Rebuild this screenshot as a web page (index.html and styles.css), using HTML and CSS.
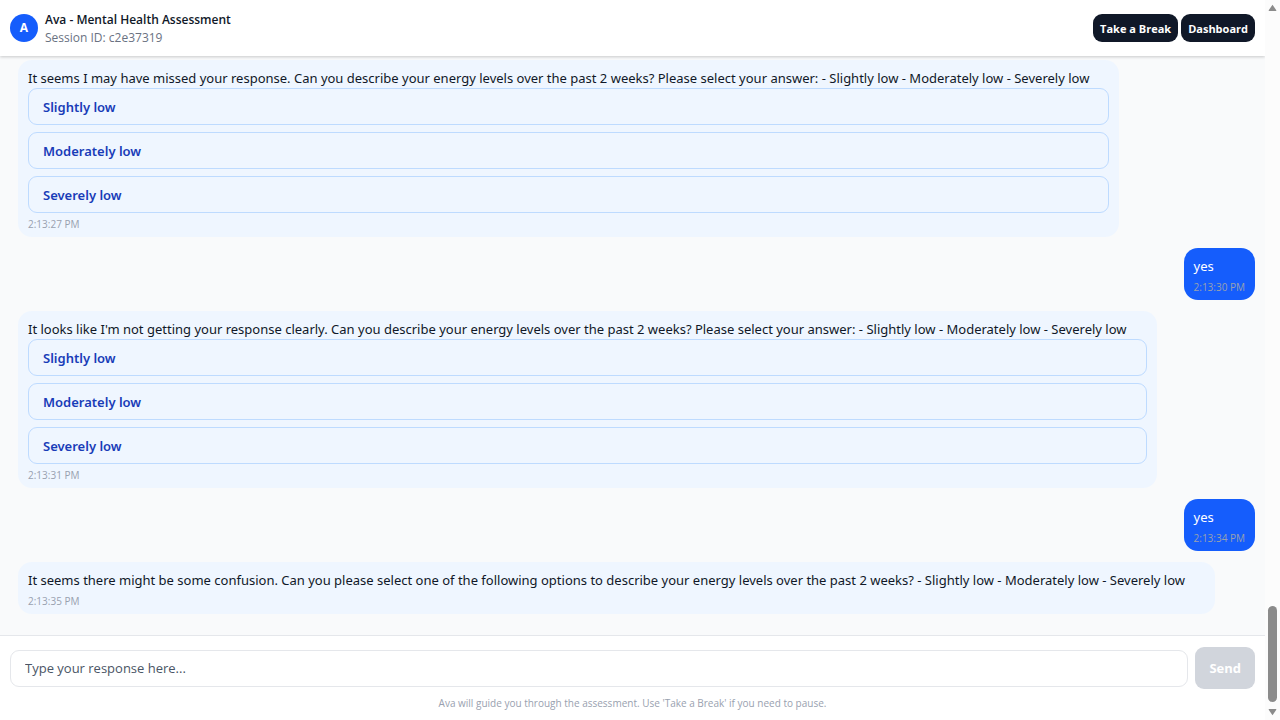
FILE: index.html
```html
<!DOCTYPE html>
<html lang="en">
<head>
<meta charset="utf-8">
<meta name="viewport" content="width=device-width, initial-scale=1">
<title>Ava - Mental Health Assessment</title>
<link rel="stylesheet" href="styles.css">
</head>
<body>
<div class="app">
  <header class="header">
    <div class="avatar" aria-hidden="true">A</div>
    <div class="identity">
      <h1 class="title">Ava - Mental Health Assessment</h1>
      <p class="session">Session ID: c2e37319</p>
    </div>
    <nav class="actions">
      <button class="action" type="button">Take a Break</button>
      <button class="action" type="button">Dashboard</button>
    </nav>
  </header>

  <main class="chat">
    <article class="bubble">
      <p class="text">It seems I may have missed your response. Can you describe your energy levels over the past 2 weeks? Please select your answer: - Slightly low - Moderately low - Severely low</p>
      <div class="options">
        <button class="option" type="button">Slightly low</button>
        <button class="option" type="button">Moderately low</button>
        <button class="option" type="button">Severely low</button>
      </div>
      <time class="time">2:13:27 PM</time>
    </article>
    <article class="bubble user">
      <p class="text">yes</p>
      <time class="time">2:13:30 PM</time>
    </article>
    <article class="bubble">
      <p class="text">It looks like I'm not getting your response clearly. Can you describe your energy levels over the past 2 weeks? Please select your answer: - Slightly low - Moderately low - Severely low</p>
      <div class="options">
        <button class="option" type="button">Slightly low</button>
        <button class="option" type="button">Moderately low</button>
        <button class="option" type="button">Severely low</button>
      </div>
      <time class="time">2:13:31 PM</time>
    </article>
    <article class="bubble user">
      <p class="text">yes</p>
      <time class="time">2:13:34 PM</time>
    </article>
    <article class="bubble">
      <p class="text">It seems there might be some confusion. Can you please select one of the following options to describe your energy levels over the past 2 weeks? - Slightly low - Moderately low - Severely low</p>
      <time class="time">2:13:35 PM</time>
    </article>
  </main>

  <footer class="footer">
    <form class="composer">
      <input class="input" type="text" aria-label="Your response" placeholder="Type your response here...">
      <button class="send" type="submit" disabled>Send</button>
    </form>
    <p class="hint">Ava will guide you through the assessment. Use 'Take a Break' if you need to pause.</p>
  </footer>
</div>
<div class="scrollbar" aria-hidden="true">
  <svg class="arrow" viewBox="0 0 9 8"><path d="M4.5 .8 8.3 6.2Q8.7 7 7.8 7H1.2Q.3 7 .7 6.2Z"/></svg>
  <div class="track"><div class="thumb"></div></div>
  <svg class="arrow" viewBox="0 0 9 8"><path d="M4.5 7.2 8.3 1.8Q8.7 1 7.8 1H1.2Q.3 1 .7 1.8Z"/></svg>
</div>
</body>
</html>
```
FILE: styles.css
```css
* { box-sizing: border-box; }

body {
  display: flex;
  min-height: 100vh;
  margin: 0;
  background: #f9fafb;
  color: #101828;
  font: 13px/20px "Open Sans", "Segoe UI", sans-serif;
}

h1, p { margin: 0; }

button, input { font-family: inherit; }

.app {
  display: flex;
  flex: 1;
  flex-direction: column;
  min-width: 0;
}

.header {
  display: flex;
  align-items: center;
  gap: 7px;
  padding: 10px;
  background: #fff;
  box-shadow: 0 1px 3px rgba(0, 0, 0, 0.2);
}

.avatar {
  display: grid;
  place-items: center;
  width: 28px;
  height: 28px;
  border-radius: 50%;
  background: #155dfc;
  color: #fff;
  font-size: 12px;
  font-weight: 700;
}

.identity {
  flex: 1;
  padding-top: 1px;
}

.title {
  font-size: 12px;
  font-weight: 600;
  line-height: 18px;
}

.session {
  color: #6a7282;
  font-size: 12px;
  line-height: 17px;
}

.actions {
  display: flex;
  gap: 3px;
}

.action {
  height: 28px;
  padding: 0 7px;
  border: 0;
  border-radius: 9px;
  background: #101828;
  color: #fff;
  font-size: 11px;
  font-weight: 700;
}

.chat {
  display: flex;
  flex: 1;
  flex-direction: column;
  align-items: flex-start;
  gap: 11px;
  padding: 4px 10px 21px 18px;
}

.bubble {
  padding: 8px 10px 5px;
  border-radius: 14px;
  background: #eff6ff;
}

.text {
  padding-right: 20px;
  font-family: "Noto Sans", "Segoe UI", sans-serif;
}

.user {
  align-self: flex-end;
  background: #155dfc;
  color: #fff;
}

.options {
  display: grid;
  gap: 7px;
}

.option {
  height: 37px;
  padding: 0 14px;
  border: 1px solid #bedbff;
  border-radius: 9px;
  background: #eff6ff;
  color: #193cb8;
  font-family: "Noto Sans", "Segoe UI", sans-serif;
  font-size: 13px;
  font-weight: 600;
  text-align: left;
}

.time {
  display: block;
  margin-top: 3px;
  color: #99a1af;
  font-size: 10px;
  line-height: 16px;
}

.footer {
  padding: 11px 10px 9px;
  border-top: 1px solid #e5e7eb;
  background: #fff;
}

.composer {
  display: flex;
  align-items: center;
  gap: 7px;
}

.input {
  flex: 1;
  min-width: 0;
  height: 37px;
  padding: 0 14px;
  border: 1px solid #e5e7eb;
  border-radius: 9px;
  background: #fff;
  color: #101828;
  font-size: 13px;
}

.input::placeholder { color: #4a5565; }

.send {
  height: 42px;
  padding: 0 14px;
  border: 0;
  border-radius: 9px;
  background: #d1d5dc;
  color: #fff;
  font-size: 13px;
  font-weight: 700;
}

.hint {
  margin-top: 6px;
  color: #99a1af;
  font-size: 10px;
  line-height: 16px;
  text-align: center;
}

.scrollbar {
  display: flex;
  flex-direction: column;
  align-items: center;
  gap: 2px;
  width: 15px;
  padding: 4px 0;
  background: #fcfcfc;
}

.arrow {
  width: 9px;
  height: 8px;
  fill: #8b8b8b;
}

.track {
  display: flex;
  flex: 1;
  align-items: flex-end;
  padding-bottom: 4px;
}

.thumb {
  width: 9px;
  height: 96px;
  border-radius: 5px;
  background: #8b8b8b;
}
```
